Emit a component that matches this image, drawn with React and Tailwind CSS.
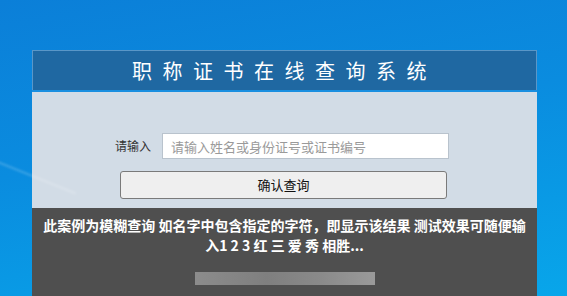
const cjk = { fontFamily: '"Microsoft YaHei", "Noto Sans CJK SC", "Noto Sans", sans-serif' };

const App = () => (
  <div
    className="relative w-[567px] h-[296px] overflow-hidden bg-[linear-gradient(170deg,#0b7fd8_0%,#0a8cdf_45%,#08a6ea_100%)]"
    style={cjk}
  >
    <div className="absolute left-[-40px] top-[170px] w-[120px] h-[2px] bg-white/20 rotate-[22deg] blur-[1px]" />
    <div className="pt-[50px] pl-[32px]">
      <div className="w-[505px] h-[260px] flex flex-col">
        <div className="h-[40px] bg-[#1f68a2] border-t border-l border-r border-[#5a97c8] flex items-center justify-center">
          <h1 className="text-white text-[20px] tracking-[10.5px] leading-none">职称证书在线查询系统</h1>
        </div>
        <div className="h-[2px] bg-[#1a8fe0]" />
        <div className="bg-[#d2dce6] pt-[41px] pb-[9px]">
          <div className="flex items-center pl-[83px]">
            <span className="text-[12px] text-[#333] w-[36px]">请输入</span>
            <input
              className="ml-[11px] w-[287px] h-[26px] bg-white border border-[#b9c3cd] px-[8px] text-[13px] text-[#333] placeholder:text-[#9a9a9a] outline-none"
              placeholder="请输入姓名或身份证号或证书编号"
            />
          </div>
          <button
            type="button"
            className="mt-[12px] ml-[88px] w-[327px] h-[28px] rounded-[3px] border border-[#7a7a7a] bg-[#efefef] text-[13px] text-[#111]"
          >
            确认查询
          </button>
        </div>
        <div className="flex-1 bg-[#4f4f4f] pt-[7px] px-[8px]">
          <p className="text-white text-[14px] font-bold leading-[20px] text-center">
            此案例为模糊查询 如名字中包含指定的字符，即显示该结果 测试效果可随便输入1 2 3 红 三 爱 秀 相胜...
          </p>
          <div className="mt-[17px] ml-[155px] w-[180px] h-[13px] bg-[linear-gradient(90deg,#8c8c8c,#7f7f7f_40%,#8a8a8a_70%,#9a9a9a)] blur-[0.6px]" />
        </div>
      </div>
    </div>
  </div>
);

export default App;
